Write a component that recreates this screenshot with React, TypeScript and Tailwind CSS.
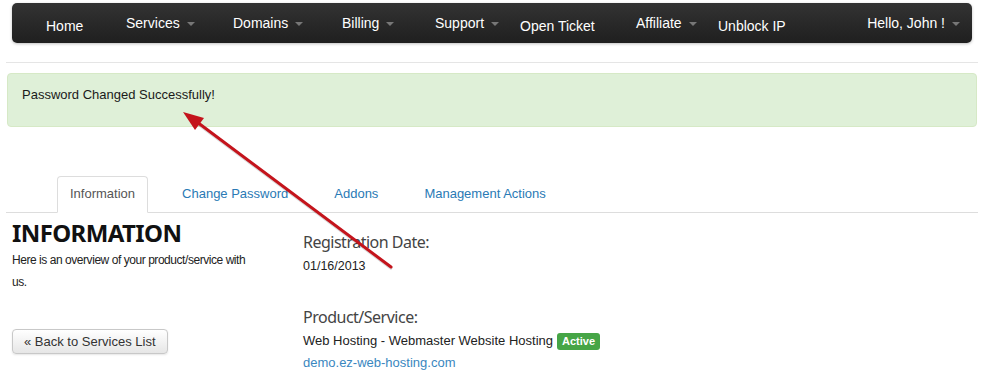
import React from 'react';

const navItems = [
  { label: 'Home', width: 'w-[80px]', caret: false },
  { label: 'Services', width: 'w-[107px]', caret: true },
  { label: 'Domains', width: 'w-[109px]', caret: true },
  { label: 'Billing', width: 'w-[93px]', caret: true },
  { label: 'Support', width: 'w-[85px]', caret: true },
  { label: 'Open Ticket', width: 'w-[116px]', caret: false },
  { label: 'Affiliate', width: 'w-[82px]', caret: true },
  { label: 'Unblock IP', width: 'w-[120px]', caret: false },
];

function Caret() {
  return <span className="ml-[7px] inline-block h-0 w-0 border-x-[4px] border-t-[4px] border-x-transparent border-t-[#777] align-middle" />;
}

export default function App() {
  return (
    <div className="relative h-[378px] w-[984px] overflow-hidden bg-white font-['Liberation_Sans',Arial,sans-serif] text-[13px] text-[#222]">
      {/* NAVBAR */}
      <div className="px-[12px] pt-[3px]">
        <div className="flex h-[40px] w-[960px] items-start rounded-[5px] bg-gradient-to-b from-[#333] to-[#1f1f1f] pl-[34px] pr-[12px] text-[14px] text-white shadow-[0_1px_3px_rgba(0,0,0,0.25)]">
          {navItems.map((item) => (
            <div key={item.label} className={`${item.width} flex items-center ${item.caret ? 'pt-[10px]' : 'pt-[13px]'}`}>
              <span>{item.label}</span>
              {item.caret && <Caret />}
            </div>
          ))}
          <div className="ml-auto flex items-center pt-[10px]">
            <span>Hello, John !</span>
            <Caret />
          </div>
        </div>
      </div>

      <div className="mx-[6px] mt-[19px] border-t border-[#e5e5e5]" />

      {/* ALERT */}
      <div className="mx-[7px] mt-[10px] h-[54px] rounded-[4px] border border-[#d6e9c6] bg-[#dff0d8] pl-[14px] pt-[11px] text-[13px] text-[#1a1a1a]">
        Password Changed Successfully!
      </div>

      {/* TABS */}
      <div className="mx-[6px] mt-[49px] flex items-end gap-[22px] border-b border-[#ddd] pl-[51px] leading-[20px]">
        <div className="-mb-px rounded-t-[4px] border border-b-white border-[#ddd] bg-white px-[12px] pb-[8px] pt-[7px] text-[#555]">Information</div>
        <div className="px-[12px] pb-[8px] pt-[8px] text-[#2a7ab5]">Change Password</div>
        <div className="px-[12px] pb-[8px] pt-[8px] text-[#2a7ab5]">Addons</div>
        <div className="px-[12px] pb-[8px] pt-[8px] text-[#2a7ab5]">Management Actions</div>
      </div>

      {/* CONTENT */}
      <div className="flex px-[12px]">
        <div className="w-[291px]">
          <h1 className="mt-[5px] font-['Noto_Sans',sans-serif] text-[24px] font-bold leading-[30px] tracking-[-0.6px] text-[#111]">INFORMATION</h1>
          <p className="mt-[1px] w-[245px] text-[12px] leading-[22px] tracking-[-0.45px] text-[#222]">
            Here is an overview of your product/service with us.
          </p>
          <button className="mt-[36px] h-[25px] rounded-[4px] border border-[#c8c8c8] bg-gradient-to-b from-white to-[#e6e6e6] px-[11px] text-[13px] text-[#333] shadow-[0_1px_2px_rgba(0,0,0,0.1)]">
            « Back to Services List
          </button>
        </div>
        <div className="pt-[17px]">
          <div className="font-['Noto_Sans',sans-serif] text-[16px] leading-[24px] tracking-[-0.5px] text-[#444]">Registration Date:</div>
          <div className="mt-[2px] text-[12.5px] leading-[20px] text-[#222]">01/16/2013</div>
          <div className="mt-[29px] font-['Noto_Sans',sans-serif] text-[16px] leading-[24px] tracking-[-0.5px] text-[#444]">Product/Service:</div>
          <div className="mt-[2px] flex items-center text-[13px] leading-[20px] text-[#222]">
            Web Hosting - Webmaster Website Hosting
            <span className="ml-[4px] rounded-[3px] bg-[#46a546] px-[5px] text-[11px] font-bold leading-[17px] text-white">Active</span>
          </div>
          <div className="mt-[2px] text-[13px] leading-[20px] text-[#3a87c0]">demo.ez-web-hosting.com</div>
        </div>
      </div>

      {/* ANNOTATION ARROW */}
      <svg className="pointer-events-none absolute inset-0" width="984" height="378">
        <line x1="391" y1="267" x2="197" y2="122" stroke="rgba(0,0,0,0.15)" strokeWidth="3" transform="translate(1,2)" />
        <line x1="391" y1="267" x2="197" y2="122" stroke="#c4141c" strokeWidth="3" strokeLinecap="round" />
        <polygon points="183,112 204,118 195,130" fill="#c4141c" />
      </svg>
    </div>
  );
}
